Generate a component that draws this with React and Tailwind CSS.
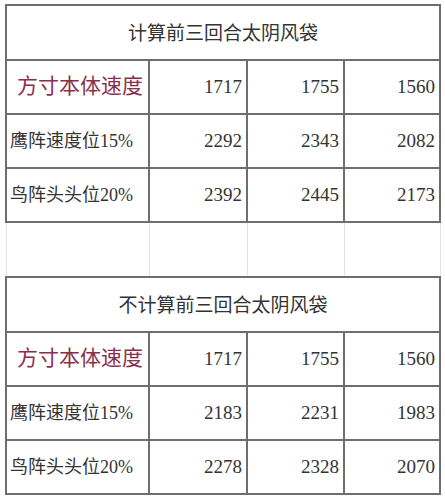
import React from "react";

const sections = [
  {
    title: "计算前三回合太阴风袋",
    rows: [
      { label: "方寸本体速度", red: true, values: [1717, 1755, 1560] },
      { label: "鹰阵速度位15%", values: [2292, 2343, 2082] },
      { label: "鸟阵头头位20%", values: [2392, 2445, 2173] },
    ],
  },
  {
    title: "不计算前三回合太阴风袋",
    rows: [
      { label: "方寸本体速度", red: true, values: [1717, 1755, 1560] },
      { label: "鹰阵速度位15%", values: [2183, 2231, 1983] },
      { label: "鸟阵头头位20%", values: [2278, 2328, 2070] },
    ],
  },
];

const font = { fontFamily: '"Liberation Serif", "Noto Sans CJK SC", serif' };

const Section = ({ title, rows }) => (
  <>
    <tr className="h-[55px]">
      <td
        colSpan={4}
        className="border-2 border-[#6e6e6e] pt-[3px] text-center text-[19px] text-[#333]"
      >
        {title}
      </td>
    </tr>
    {rows.map((row) => (
      <tr key={row.label} className="h-[54px]">
        <td
          className={
            row.red
              ? "border-2 border-[#6e6e6e] pl-[10px] text-[21px] text-[#8a2f4e] whitespace-nowrap"
              : "border-2 border-[#6e6e6e] pl-[3px] text-[18px] text-[#333] whitespace-nowrap"
          }
        >
          {row.label}
        </td>
        {row.values.map((v, i) => (
          <td
            key={i}
            className="border-2 border-[#6e6e6e] pr-[4px] text-right text-[19px] text-[#333]"
          >
            {v}
          </td>
        ))}
      </tr>
    ))}
  </>
);

export default function App() {
  return (
    <div className="w-[445px] h-[500px] bg-white overflow-hidden pt-[4px] pl-[5px]" style={font}>
      <table className="table-fixed border-collapse w-[434px]">
        <colgroup>
          <col className="w-[143px]" />
          <col className="w-[98px]" />
          <col className="w-[97px]" />
          <col className="w-[96px]" />
        </colgroup>
        <tbody>
          <Section {...sections[0]} />
          <tr className="h-[55px]">
            <td className="border border-[#e4e4e4]"></td>
            <td className="border border-[#e4e4e4]"></td>
            <td className="border border-[#e4e4e4]"></td>
            <td className="border border-[#e4e4e4]"></td>
          </tr>
          <Section {...sections[1]} />
        </tbody>
      </table>
    </div>
  );
}
